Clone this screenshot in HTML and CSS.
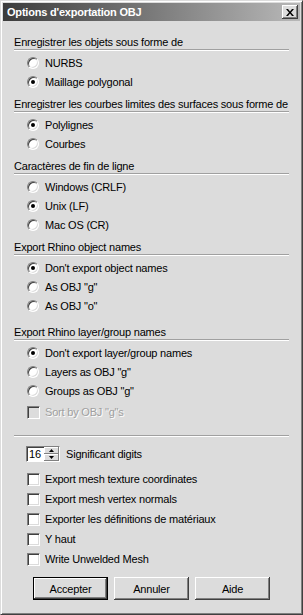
FILE: index.html
```html
<!DOCTYPE html>
<html lang="fr">
<head>
  <meta charset="UTF-8">
  <meta name="viewport" content="width=device-width, initial-scale=1.0">
  <title>Options d'exportation OBJ</title>
  <link rel="stylesheet" href="styles.css">
</head>
<body>
  <div class="window">
    <div class="titlebar">
      <span class="title">Options d'exportation OBJ</span>
      <span class="close">
        <svg width="8" height="7" viewBox="0 0 8 7">
          <path d="M0 0h2l2 2.5 2-2.5h2l-3 3.5 3 3.5h-2l-2-2.5-2 2.5h-2l3-3.5z" fill="#000"/>
        </svg>
      </span>
    </div>

    <div class="content">
      <!-- Type d'objet -->
      <div class="group">
        <div class="group-title">Enregistrer les objets sous forme de</div>
        <div class="options">
          <div class="option"><span class="radio"></span>NURBS</div>
          <div class="option"><span class="radio checked"></span>Maillage polygonal</div>
        </div>
      </div>

      <!-- Courbes limites -->
      <div class="group">
        <div class="group-title">Enregistrer les courbes limites des surfaces sous forme de</div>
        <div class="options">
          <div class="option"><span class="radio checked"></span>Polylignes</div>
          <div class="option"><span class="radio"></span>Courbes</div>
        </div>
      </div>

      <!-- Fin de ligne -->
      <div class="group">
        <div class="group-title">Caractères de fin de ligne</div>
        <div class="options">
          <div class="option"><span class="radio"></span>Windows (CRLF)</div>
          <div class="option"><span class="radio checked"></span>Unix (LF)</div>
          <div class="option"><span class="radio"></span>Mac OS (CR)</div>
        </div>
      </div>

      <!-- Noms d'objets -->
      <div class="group">
        <div class="group-title">Export Rhino object names</div>
        <div class="options">
          <div class="option"><span class="radio checked"></span>Don't export object names</div>
          <div class="option"><span class="radio"></span>As OBJ "g"</div>
          <div class="option"><span class="radio"></span>As OBJ "o"</div>
        </div>
      </div>

      <!-- Noms de calques / groupes -->
      <div class="group group-last">
        <div class="group-title">Export Rhino layer/group names</div>
        <div class="options">
          <div class="option"><span class="radio checked"></span>Don't export layer/group names</div>
          <div class="option"><span class="radio"></span>Layers as OBJ "g"</div>
          <div class="option"><span class="radio"></span>Groups as OBJ "g"</div>
          <div class="option disabled"><span class="check"></span>Sort by OBJ "g"s</div>
        </div>
      </div>

      <div class="separator"></div>

      <div class="extras">
        <div class="spin-row">
          <span class="spinner">
            <span class="spin-value">16</span>
            <span class="spin-buttons">
              <span class="spin-btn"><svg width="5" height="3" viewBox="0 0 5 3"><path d="M2.5 0L5 3H0z" fill="#000"/></svg></span>
              <span class="spin-btn"><svg width="5" height="3" viewBox="0 0 5 3"><path d="M0 0h5L2.5 3z" fill="#000"/></svg></span>
            </span>
          </span>
          Significant digits
        </div>
        <div class="check-row"><span class="check"></span>Export mesh texture coordinates</div>
        <div class="check-row"><span class="check"></span>Export mesh vertex normals</div>
        <div class="check-row"><span class="check"></span>Exporter les définitions de matériaux</div>
        <div class="check-row"><span class="check"></span>Y haut</div>
        <div class="check-row"><span class="check"></span>Write Unwelded Mesh</div>
      </div>

      <div class="buttons">
        <button class="default">Accepter</button>
        <button>Annuler</button>
        <button>Aide</button>
      </div>
    </div>
  </div>
</body>
</html>
```

FILE: styles.css
```css
:root {
  --fond: #dcdcdc;
  --blanc: #ffffff;
  --gris: #808080;
  --gris-fonce: #404040;
  --trait: #a0a0a0;
}

body {
  margin: 0;
  background-color: var(--fond);
  font-family: 'Liberation Sans', Arial, sans-serif;
  font-size: 11px;
  letter-spacing: -0.2px;
  color: #000;
}

.window {
  width: 303px;
  height: 615px;
  box-sizing: border-box;
  padding: 2px;
  background-color: var(--fond);
  border: 1px solid;
  border-color: var(--fond) var(--gris-fonce) var(--gris-fonce) var(--fond);
  box-shadow: inset 1px 1px 0 var(--blanc), inset -1px -1px 0 var(--gris);
}

/* Barre de titre */
.titlebar {
  height: 18px;
  display: flex;
  align-items: center;
  justify-content: space-between;
  padding: 0 2px 0 4px;
  background: linear-gradient(to right, #3c3c3c, #b8b8b8);
}

.title {
  color: var(--blanc);
  font-weight: bold;
  white-space: nowrap;
}

.close {
  width: 16px;
  height: 14px;
  display: flex;
  align-items: center;
  justify-content: center;
  background-color: var(--fond);
  box-shadow: inset -1px -1px 0 var(--gris-fonce), inset 1px 1px 0 var(--blanc),
              inset -2px -2px 0 var(--gris);
}

/* Contenu */
.content {
  padding: 15px 11px 0 11px;
}

.group + .group {
  margin-top: 7px;
}

.group + .group-last {
  margin-top: 11px;
}

.group-title {
  height: 13px;
  line-height: 13px;
  white-space: nowrap;
  border-bottom: 1px solid var(--trait);
  box-shadow: 0 1px 0 var(--blanc);
}

.options {
  padding: 3px 0 0 13px;
}

.option {
  height: 19px;
  display: flex;
  align-items: center;
  white-space: nowrap;
}

.option.disabled {
  height: 18px;
  margin-top: 3px;
  color: var(--trait);
  text-shadow: 1px 1px 0 var(--blanc);
}

/* Boutons radio */
.radio {
  position: relative;
  width: 12px;
  height: 12px;
  box-sizing: border-box;
  margin-right: 6px;
  border-radius: 50%;
  border: 1px solid;
  border-color: var(--gris) var(--blanc) var(--blanc) var(--gris);
  background-color: var(--blanc);
  box-shadow: inset 1px 1px 0 var(--gris-fonce), inset -1px -1px 0 var(--fond);
}

.radio.checked::after {
  content: '';
  position: absolute;
  left: 3px;
  top: 3px;
  width: 4px;
  height: 4px;
  border-radius: 50%;
  background-color: #000;
}

/* Cases à cocher */
.check {
  width: 13px;
  height: 13px;
  box-sizing: border-box;
  margin-right: 5px;
  border: 1px solid;
  border-color: var(--gris) var(--blanc) var(--blanc) var(--gris);
  background-color: var(--blanc);
  box-shadow: inset 1px 1px 0 var(--gris-fonce), inset -1px -1px 0 var(--fond);
}

.disabled .check {
  background-color: var(--fond);
}

.separator {
  margin-top: 14px;
  border-top: 1px solid var(--trait);
  border-bottom: 1px solid var(--blanc);
}

.extras {
  padding: 7px 0 0 13px;
}

/* Compteur */
.spin-row {
  height: 20px;
  display: flex;
  align-items: center;
  margin-left: -1px;
  margin-bottom: 5px;
  white-space: nowrap;
}

.spinner {
  display: flex;
  width: 34px;
  height: 16px;
  box-sizing: border-box;
  margin-right: 6px;
  border: 1px solid;
  border-color: var(--gris) var(--blanc) var(--blanc) var(--gris);
  box-shadow: inset 1px 1px 0 var(--gris-fonce);
  background-color: var(--blanc);
}

.spin-value {
  flex: 1;
  padding: 1px 0 0 2px;
  line-height: 13px;
}

.spin-buttons {
  display: flex;
  flex-direction: column;
  width: 15px;
}

.spin-btn {
  flex: 1;
  display: flex;
  align-items: center;
  justify-content: center;
  background-color: var(--fond);
  box-shadow: inset -1px -1px 0 var(--gris), inset 1px 1px 0 var(--blanc);
}

.check-row {
  height: 20px;
  display: flex;
  align-items: center;
  white-space: nowrap;
}

/* Boutons */
.buttons {
  display: flex;
  gap: 6px;
  margin: 8px 0 0 19px;
}

button {
  width: 75px;
  height: 23px;
  padding: 0;
  font-family: inherit;
  font-size: 11px;
  letter-spacing: inherit;
  color: #000;
  border: none;
  background-color: var(--fond);
  box-shadow: inset -1px -1px 0 var(--gris-fonce), inset 1px 1px 0 var(--blanc),
              inset -2px -2px 0 var(--gris);
}

button.default {
  border: 1px solid #000;
}
```
